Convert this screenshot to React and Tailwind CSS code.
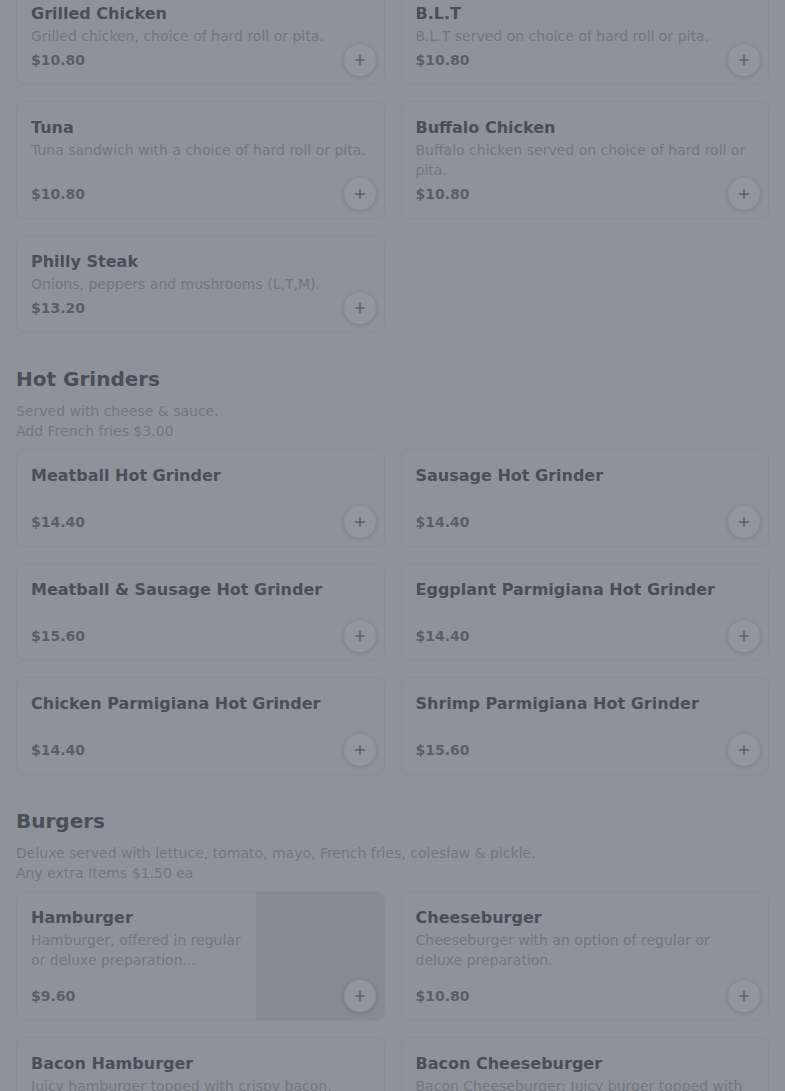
import { Plus } from 'lucide-react'

const sections = [
  {
    id: 'cold',
    items: [
      { name: 'Grilled Chicken', desc: 'Grilled chicken, choice of hard roll or pita.', price: '$10.80' },
      { name: 'B.L.T', desc: 'B.L.T served on choice of hard roll or pita.', price: '$10.80' },
      { name: 'Tuna', desc: 'Tuna sandwich with a choice of hard roll or pita.', price: '$10.80' },
      { name: 'Buffalo Chicken', desc: 'Buffalo chicken served on choice of hard roll or pita.', price: '$10.80' },
      { name: 'Philly Steak', desc: 'Onions, peppers and mushrooms (L,T,M).', price: '$13.20' },
    ],
  },
  {
    id: 'grinders',
    title: 'Hot Grinders',
    notes: ['Served with cheese & sauce.', 'Add French fries $3.00'],
    items: [
      { name: 'Meatball Hot Grinder', price: '$14.40' },
      { name: 'Sausage Hot Grinder', price: '$14.40' },
      { name: 'Meatball & Sausage Hot Grinder', price: '$15.60' },
      { name: 'Eggplant Parmigiana Hot Grinder', price: '$14.40' },
      { name: 'Chicken Parmigiana Hot Grinder', price: '$14.40' },
      { name: 'Shrimp Parmigiana Hot Grinder', price: '$15.60' },
    ],
  },
  {
    id: 'burgers',
    title: 'Burgers',
    notes: ['Deluxe served with lettuce, tomato, mayo, French fries, coleslaw & pickle.', 'Any extra Items $1.50 ea'],
    items: [
      { name: 'Hamburger', desc: 'Hamburger, offered in regular or deluxe preparation...', price: '$9.60', image: true },
      { name: 'Cheeseburger', desc: 'Cheeseburger with an option of regular or deluxe preparation.', price: '$10.80' },
      { name: 'Bacon Hamburger', desc: 'Juicy hamburger topped with crispy bacon, lettuce and tomato.', price: '$12.00' },
      { name: 'Bacon Cheeseburger', desc: 'Bacon Cheeseburger: Juicy burger topped with crispy bacon and melted cheese.', price: '$13.20' },
    ],
  },
]

function ItemCard({ item }) {
  return (
    <div className="relative flex rounded-lg border border-[#8a8d96] bg-[#8f929b] overflow-hidden">
      <div className="flex flex-1 flex-col px-[14px] py-[14px] min-w-0">
        <h3 className="text-base leading-6 font-bold text-[#4a4e59]">{item.name}</h3>
        <p className="min-h-5 text-sm leading-5 text-[#72767f] line-clamp-2">{item.desc}</p>
        <p className="mt-auto pt-1 text-sm leading-5 font-bold text-[#5a5e69]">{item.price}</p>
      </div>
      {item.image && <div className="h-32 w-32 shrink-0 bg-[#878a93]" />}
      <button className="absolute right-2 bottom-2 flex h-8 w-8 items-center justify-center rounded-full bg-[#93969f] shadow-[0_1px_4px_rgba(40,44,54,0.22)]">
        <Plus size={16} strokeWidth={1.5} className="text-[#444853]" />
      </button>
    </div>
  )
}

function App() {
  return (
    <div className="h-screen overflow-hidden bg-[#8f929b] font-['DejaVu_Sans',sans-serif]">
      <div className="-mt-[13px] px-4">
        {sections.map((s) => (
          <section key={s.id} className={s.title ? 'mt-8' : ''}>
            {s.title && (
              <div className="mb-2">
                <h2 className="text-xl leading-7 font-bold text-[#4a4e59]">{s.title}</h2>
                <div className="mt-2 text-sm leading-5 text-[#72767f]">
                  {s.notes.map((n) => (
                    <p key={n}>{n}</p>
                  ))}
                </div>
              </div>
            )}
            <div className="grid grid-cols-2 gap-4">
              {s.items.map((it) => (
                <ItemCard key={it.name} item={it} />
              ))}
            </div>
          </section>
        ))}
      </div>
    </div>
  )
}

export default App
